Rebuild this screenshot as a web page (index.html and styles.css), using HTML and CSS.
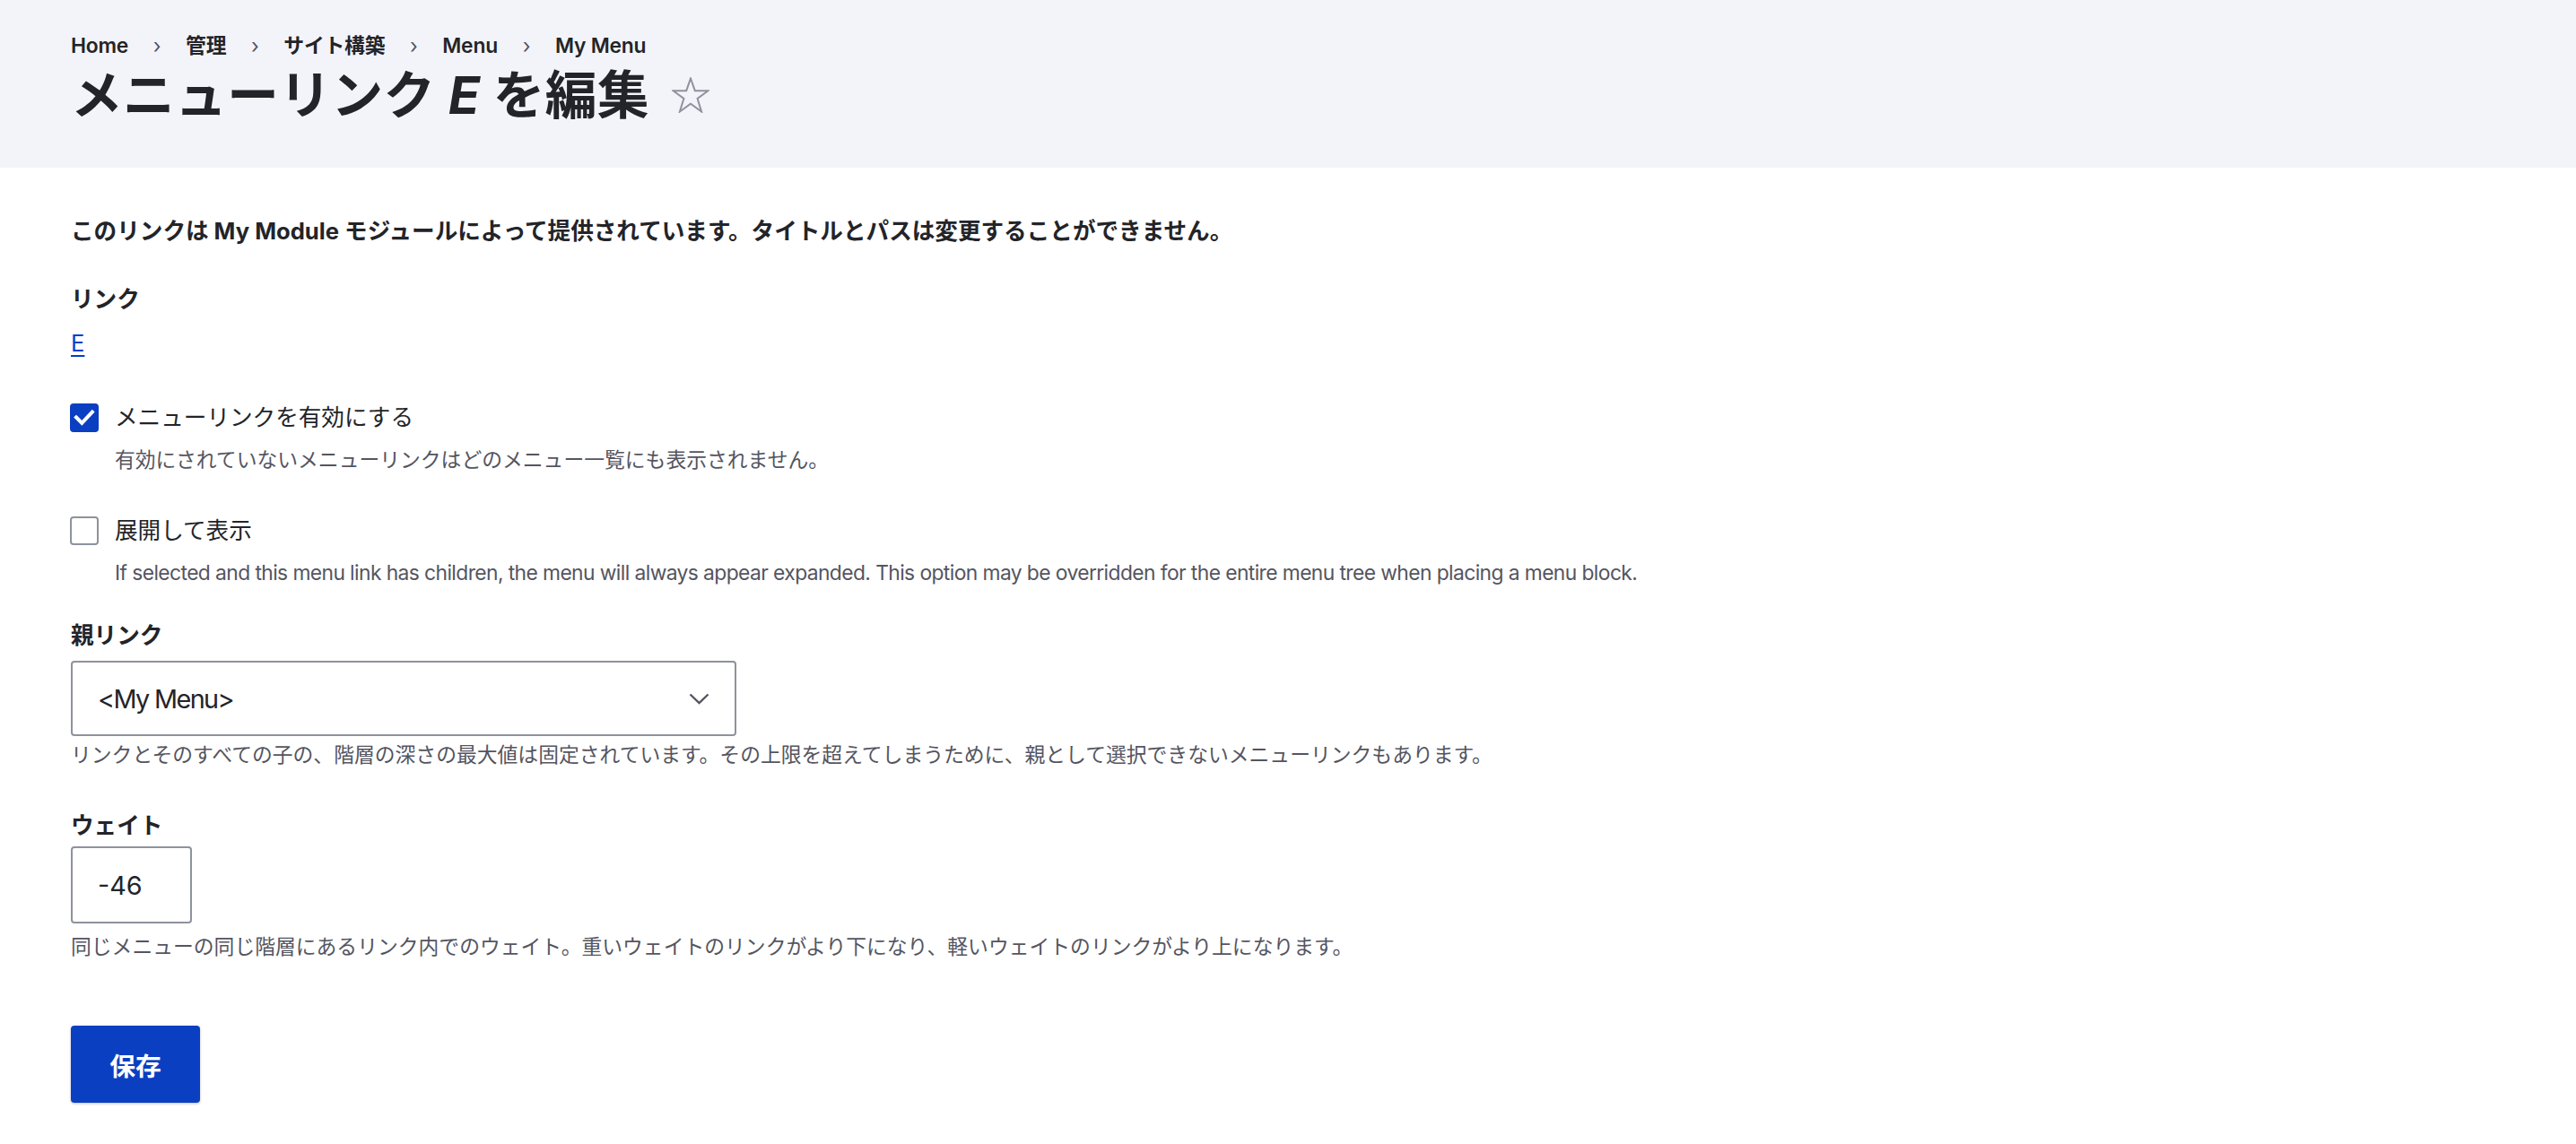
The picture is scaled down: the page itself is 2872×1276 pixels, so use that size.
FILE: index.html
```html
<!DOCTYPE html>
<html lang="ja">
<head>
<meta charset="utf-8">
<title>メニューリンク E を編集</title>
<link rel="stylesheet" href="styles.css">
</head>
<body>
<header class="page-header">
  <nav class="breadcrumb" aria-label="Breadcrumb">
    <ol>
      <li><a href="#">Home</a></li>
      <li><a href="#">管理</a></li>
      <li><a href="#">サイト構築</a></li>
      <li><a href="#">Menu</a></li>
      <li><a href="#">My Menu</a></li>
    </ol>
  </nav>
  <h1 class="page-title"><span class="title-text">メニューリンク <em>E</em> を編集</span><svg class="star" width="42" height="40" viewBox="0 0 42 40" aria-hidden="true"><polygon points="21,1.5 25.8,15.2 40.5,15.2 28.6,24 33.1,38.5 21,29.8 8.9,38.5 13.4,24 1.5,15.2 16.2,15.2" fill="none" stroke="#8e929c" stroke-width="2" stroke-linejoin="miter"/></svg></h1>
</header>

<main class="content">
  <p class="intro">このリンクは My Module モジュールによって提供されています。タイトルとパスは変更することができません。</p>

  <div class="item item-link">
    <div class="label">リンク</div>
    <a class="value-link" href="#">E</a>
  </div>

  <div class="check-item check-first">
    <div class="check-row">
      <span class="checkbox checked"><svg width="32" height="32" viewBox="0 0 32 32" aria-hidden="true"><polyline points="7,15.5 13.3,21.8 24.8,9.6" fill="none" stroke="#fff" stroke-width="4" stroke-linecap="square"/></svg></span>
      <span class="check-label">メニューリンクを有効にする</span>
    </div>
    <div class="desc indent">有効にされていないメニューリンクはどのメニュー一覧にも表示されません。</div>
  </div>

  <div class="check-item check-second">
    <div class="check-row">
      <span class="checkbox"></span>
      <span class="check-label">展開して表示</span>
    </div>
    <div class="desc indent desc-en">If selected and this menu link has children, the menu will always appear expanded. This option may be overridden for the entire menu tree when placing a menu block.</div>
  </div>

  <div class="item item-parent">
    <div class="label">親リンク</div>
    <div class="select" role="combobox">
      <span class="select-value">&lt;My Menu&gt;</span>
      <svg class="chevron" width="23" height="13" viewBox="0 0 23 13" aria-hidden="true"><polyline points="1.5,1.5 11.5,11 21.5,1.5" fill="none" stroke="#545560" stroke-width="2.4"/></svg>
    </div>
    <div class="desc desc-select">リンクとそのすべての子の、階層の深さの最大値は固定されています。その上限を超えてしまうために、親として選択できないメニューリンクもあります。</div>
  </div>

  <div class="item item-weight">
    <div class="label">ウェイト</div>
    <input class="text-input" type="text" value="-46">
    <div class="desc desc-input">同じメニューの同じ階層にあるリンク内でのウェイト。重いウェイトのリンクがより下になり、軽いウェイトのリンクがより上になります。</div>
  </div>

  <div class="actions">
    <button class="button-primary" type="button">保存</button>
  </div>
</main>
</body>
</html>
```

FILE: styles.css
```css
* { box-sizing: border-box; }

html, body {
  margin: 0;
  padding: 0;
  background: #ffffff;
}

body {
  font-family: Inter, "Noto Sans CJK JP", "Noto Sans", sans-serif;
  color: #232429;
}

/* Header */
.page-header {
  background: #f3f4f9;
  height: 187px;
  padding: 36px 0 0 79px;
}

.breadcrumb ol {
  list-style: none;
  margin: 0;
  padding: 0;
  display: flex;
  font-size: 22.8px;
  line-height: 30px;
  font-weight: 600;
  letter-spacing: -0.2px;
}

.breadcrumb li + li::before {
  content: "\203A";
  display: inline-block;
  width: 64px;
  text-align: center;
  font-weight: 400;
  color: #545560;
}

.breadcrumb a {
  color: #232429;
  text-decoration: none;
}

.page-title {
  margin: 8px 0 0;
  height: 64px;
  display: flex;
  align-items: center;
  font-size: 57.6px;
  line-height: 64px;
  font-weight: 700;
  color: #232429;
  letter-spacing: 0.5px;
}

.page-title em {
  font-style: italic;
}

.star {
  margin-left: 25px;
  flex: none;
}

/* Content */
.content {
  padding: 53px 79px 60px;
}

.intro {
  margin: 0;
  font-size: 25.6px;
  line-height: 36px;
  font-weight: 700;
}

.label {
  font-size: 25.6px;
  line-height: 36px;
  font-weight: 700;
}

.item-link { margin-top: 40px; }

.value-link {
  display: inline-block;
  margin-top: 15px;
  font-size: 25.6px;
  line-height: 32px;
  color: #003ecc;
  text-decoration: underline;
  text-underline-offset: 4px;
  text-decoration-thickness: 2px;
}

.check-first { margin-top: 51px; }
.check-second { margin-top: 47px; }

.check-row {
  display: flex;
  align-items: center;
  height: 32px;
}

.checkbox {
  flex: none;
  width: 32px;
  height: 32px;
  border: 2px solid #8e929c;
  border-radius: 4px;
  background: #fff;
  display: flex;
  align-items: center;
  justify-content: center;
  margin-left: -1px;
}

.checkbox.checked {
  background: #0b3fc2;
  border-color: #0b3fc2;
}

.checkbox svg { flex: none; }

.check-label {
  margin-left: 18px;
  font-size: 25.6px;
  line-height: 32px;
  font-weight: 400;
}

.desc {
  font-size: 22.8px;
  line-height: 32px;
  color: #545560;
}

.desc.indent {
  margin-top: 15px;
  padding-left: 49px;
}

.desc-en {
  letter-spacing: -0.58px;
}

.item-parent { margin-top: 36px; }

.select {
  margin-top: 10px;
  width: 742px;
  height: 84px;
  border: 2px solid #8e929c;
  border-radius: 4px;
  background: #fff;
  display: flex;
  align-items: center;
  justify-content: space-between;
  padding: 0 28px 0 28px;
  font-size: 28.8px;
  color: #232429;
}

.select-value {
  letter-spacing: -1.6px;
}

.desc-select { margin-top: 5px; }

.item-weight { margin-top: 45px; }

.text-input {
  display: block;
  margin: 5px 0 0;
  width: 135px;
  height: 86px;
  border: 2px solid #8e929c;
  border-radius: 4px;
  background: #fff;
  padding: 0 0 0 28px;
  font-family: Inter, "Noto Sans CJK JP", sans-serif;
  font-size: 28.8px;
  color: #232429;
  outline: none;
}

.desc-input { margin-top: 10px; }

.actions { margin-top: 72px; }

.button-primary {
  width: 144px;
  height: 86px;
  border: 0;
  border-radius: 4px;
  background: #0b3fc2;
  color: #ffffff;
  font-family: Inter, "Noto Sans CJK JP", sans-serif;
  font-size: 28.8px;
  font-weight: 700;
  box-shadow: 0 1px 3px rgba(0, 0, 0, 0.25);
  padding: 0;
  cursor: pointer;
}
```
